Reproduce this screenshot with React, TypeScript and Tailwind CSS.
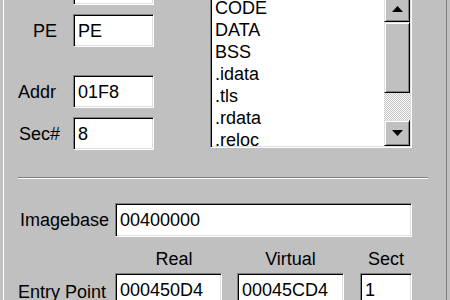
import React from "react";

function Field({ value, className }: { value: string; className: string }) {
  return (
    <div
      className={
        "bg-white border border-t-[#808080] border-l-[#808080] border-b-white border-r-white shadow-[inset_1px_1px_0_#000,inset_-1px_-1px_0_#dfdfdf] pl-[4px] flex items-center whitespace-nowrap overflow-hidden " +
        className
      }
    >
      {value}
    </div>
  );
}

function Arrow({ up }: { up: boolean }) {
  return (
    <svg width="11" height="6" viewBox="0 0 11 6">
      {up ? <polygon points="5.5,0 11,6 0,6" fill="#000" /> : <polygon points="0,0 11,0 5.5,6" fill="#000" />}
    </svg>
  );
}

const raised =
  "bg-[#c0c0c0] border border-t-[#dfdfdf] border-l-[#dfdfdf] border-b-black border-r-black shadow-[inset_1px_1px_0_#fff,inset_-1px_-1px_0_#808080]";

export default function App() {
  const items = ["CODE", "DATA", "BSS", ".idata", ".tls", ".rdata", ".reloc", ".rsrc"];
  return (
    <div className="w-[450px] h-[300px] overflow-hidden bg-[#c0c0c0] font-['Liberation_Sans',Arial,sans-serif] text-[18px] leading-[22px] text-black">
      <div className="ml-[3px] w-[444px] h-[300px] border-l border-l-white border-r border-r-[#808080]">
        <div className="flex">
          <div className="w-[206px] -mt-[28px] flex flex-col">
            <div className="flex items-center h-[33px]">
              <div className="w-[69px]" />
              <Field value="" className="w-[81px] h-[33px]" />
            </div>
            <div className="flex items-center h-[33px] mt-[9px]">
              <div className="w-[69px] pl-[29px]">PE</div>
              <Field value="PE" className="w-[81px] h-[33px]" />
            </div>
            <div className="flex items-center h-[33px] mt-[28px]">
              <div className="w-[69px] pl-[14px]">Addr</div>
              <Field value="01F8" className="w-[81px] h-[33px]" />
            </div>
            <div className="flex items-center h-[33px] mt-[9px]">
              <div className="w-[69px] pl-[15px]">Sec#</div>
              <Field value="8" className="w-[81px] h-[33px]" />
            </div>
          </div>
          <div className="-mt-[6px] w-[202px] h-[154px] bg-white border border-t-[#808080] border-l-[#808080] border-b-white border-r-white shadow-[inset_1px_1px_0_#000,inset_-1px_-1px_0_#dfdfdf] p-[1px] flex">
            <div className="flex-1 overflow-hidden pl-[3px] pt-[1px]">
              {items.map((it) => (
                <div key={it} className="h-[22px]">
                  {it}
                </div>
              ))}
            </div>
            <div className="w-[26px] flex flex-col">
              <div className={"h-[26px] flex items-center justify-center " + raised}>
                <Arrow up />
              </div>
              <div className={"h-[71px] " + raised} />
              <div className="h-[27px] bg-[repeating-conic-gradient(#c0c0c0_0_25%,#ffffff_0_50%)] bg-[length:2px_2px]" />
              <div className={"h-[26px] flex items-center justify-center " + raised}>
                <Arrow up={false} />
              </div>
            </div>
          </div>
        </div>
        <div className="mt-[27px] ml-[14px] w-[410px] border-t border-t-[#808080] border-b border-b-white" />
        <div className="mt-[24px] flex items-center h-[34px]">
          <div className="w-[111px] pl-[16px]">Imagebase</div>
          <Field value="00400000" className="w-[297px] h-[34px]" />
        </div>
        <div className="mt-[11px] flex h-[22px]">
          <div className="w-[111px]" />
          <div className="w-[107px] text-center pl-[11px]">Real</div>
          <div className="w-[107px] ml-[15px] text-center">Virtual</div>
          <div className="w-[52px] ml-[16px] text-center">Sect</div>
        </div>
        <div className="mt-[3px] flex items-center h-[33px]">
          <div className="w-[111px] pl-[14px] pt-[4px]">Entry Point</div>
          <Field value="000450D4" className="w-[107px] h-[33px]" />
          <Field value="00045CD4" className="w-[107px] h-[33px] ml-[15px]" />
          <Field value="1" className="w-[52px] h-[33px] ml-[16px]" />
        </div>
      </div>
    </div>
  );
}
